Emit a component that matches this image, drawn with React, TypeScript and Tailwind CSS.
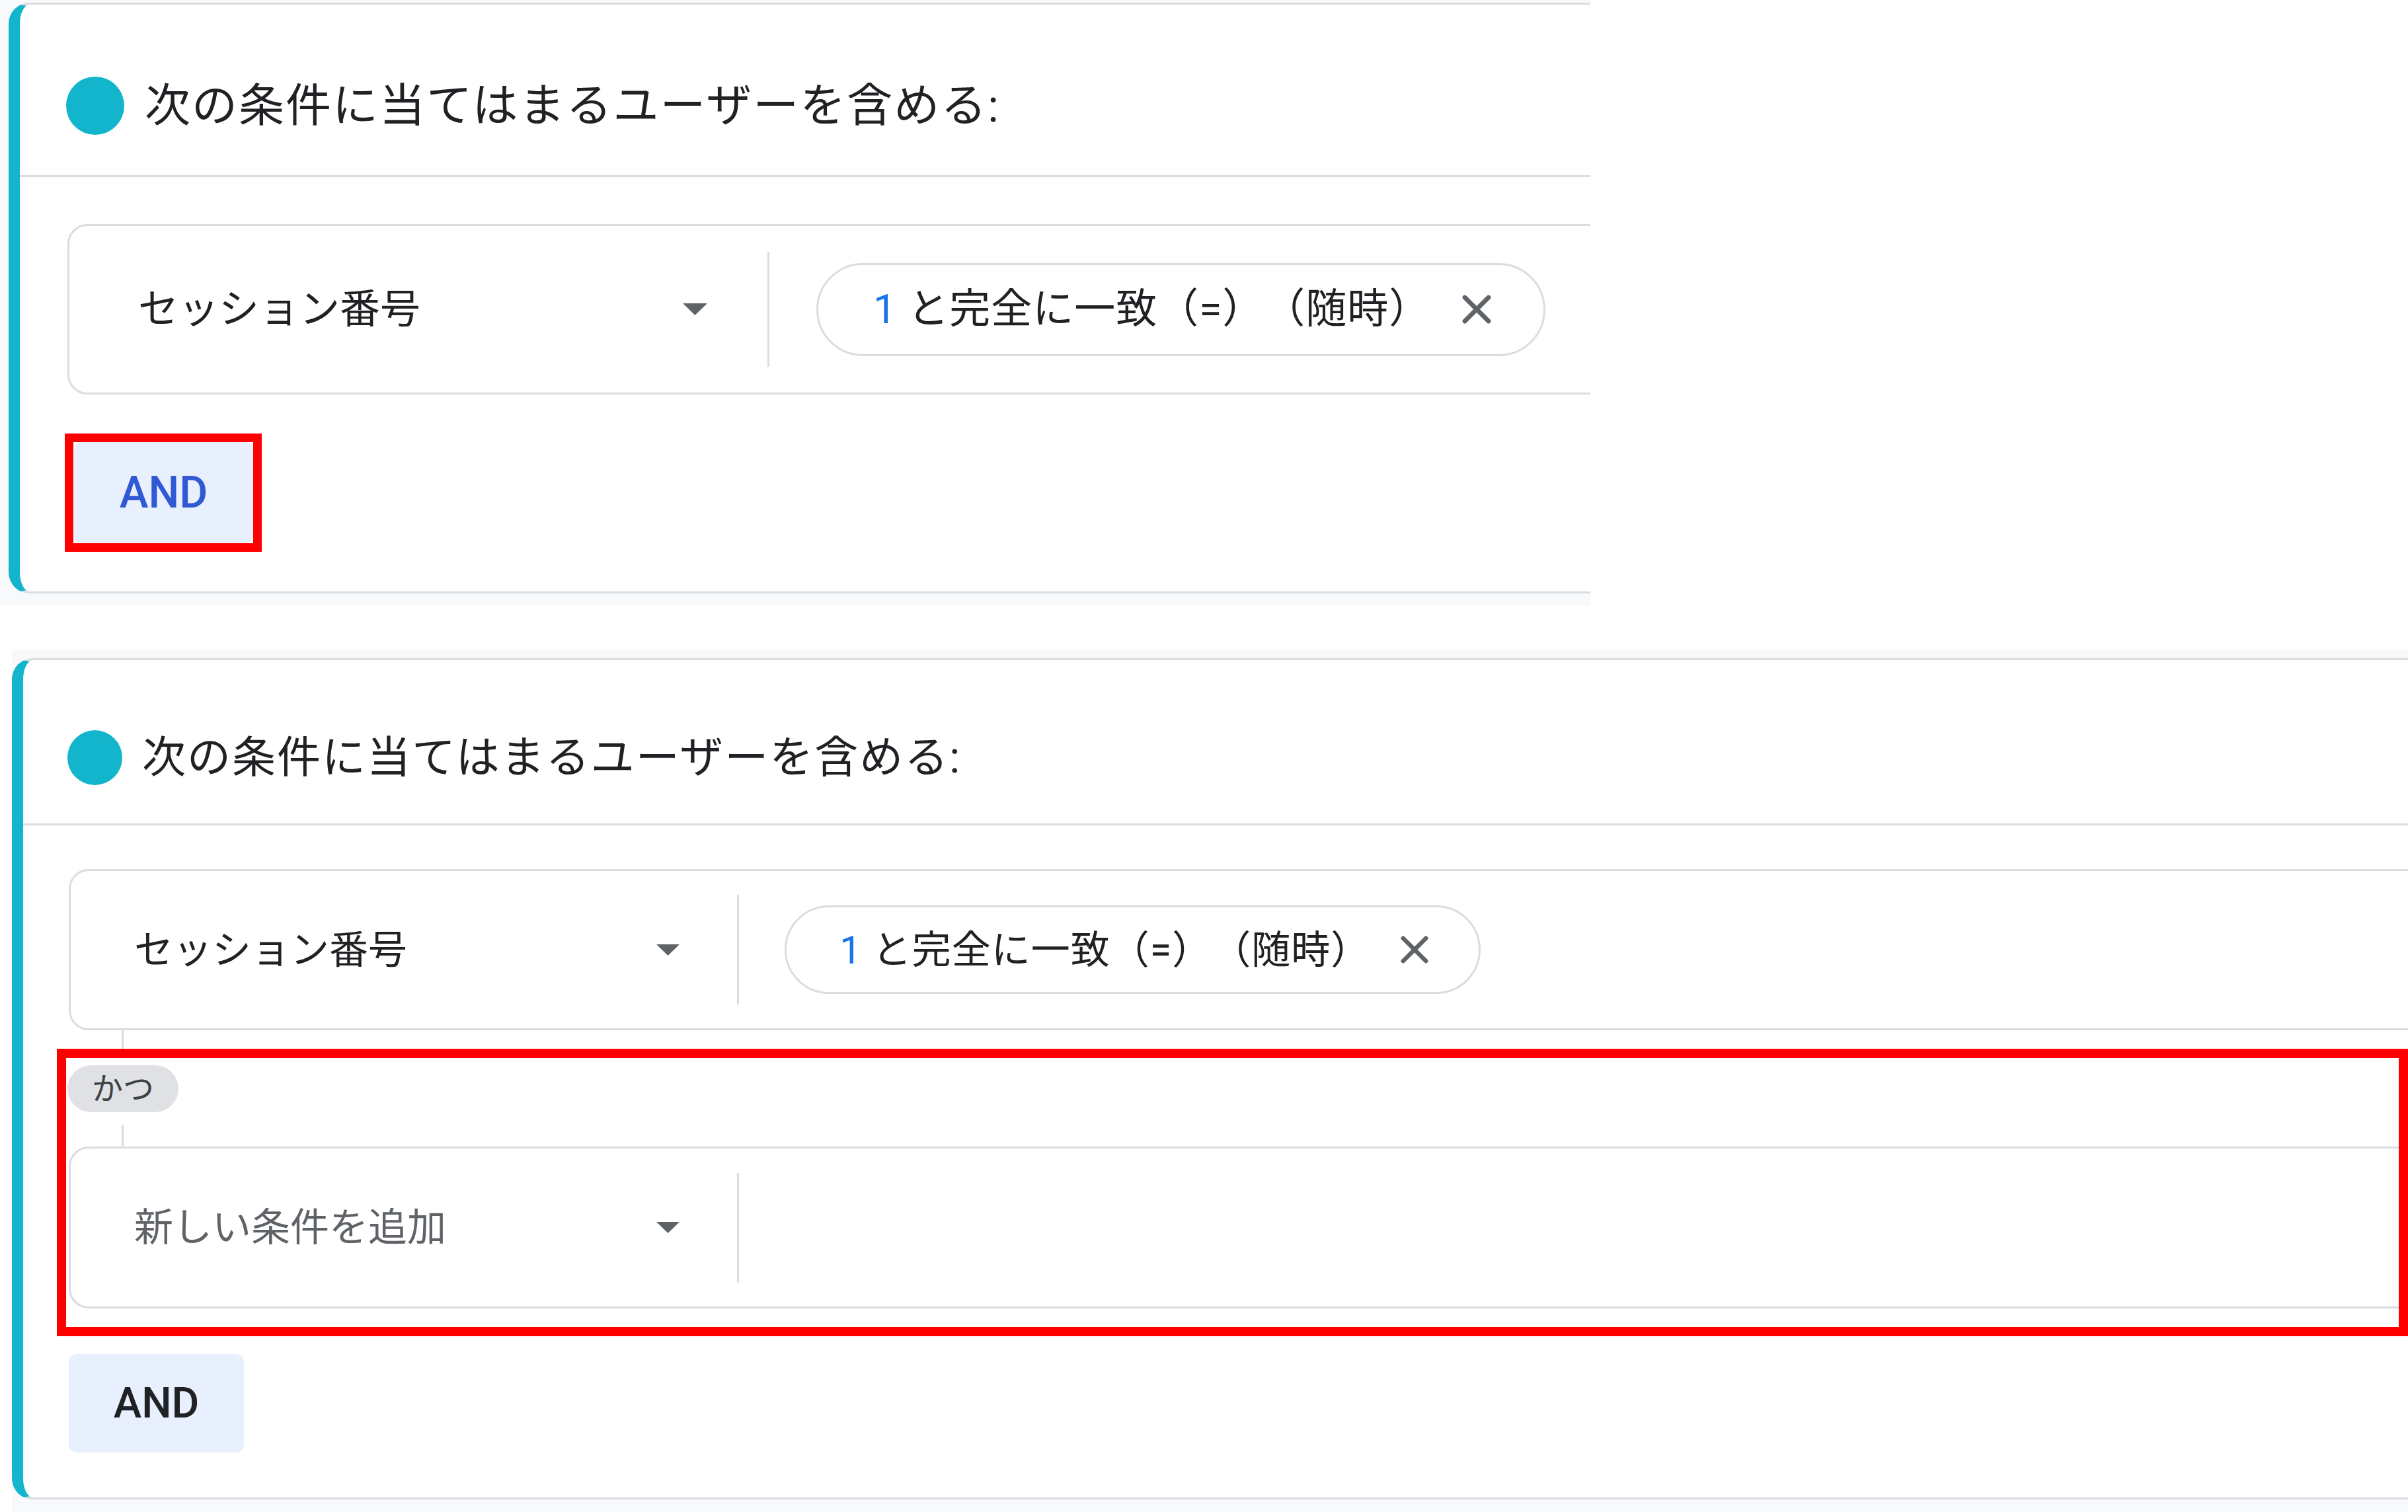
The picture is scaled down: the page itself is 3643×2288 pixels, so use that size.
import React from "react";

const Caret = ({ w, h }: { w: number; h: number }) => (
  <svg width={w} height={h} viewBox="0 0 10 5" preserveAspectRatio="none" className="shrink-0">
    <path d="M0 0h10L5 5z" fill="#5f6368" />
  </svg>
);

const Cross = ({ size }: { size: number }) => (
  <svg width={size} height={size} viewBox="0 0 24 24" className="shrink-0">
    <path d="M3 3l18 18M21 3L3 21" stroke="#5f6368" strokeWidth="3.4" strokeLinecap="round" />
  </svg>
);

export default function App() {
  return (
    <div className="relative w-[3643px] h-[2288px] overflow-hidden bg-white font-[Roboto,'Noto_Sans_CJK_JP',sans-serif] leading-none">
      {/* first capture */}
      <div className="w-[2406px] h-[916px] bg-[#f8f9fa] pl-[13px] pt-[4px]">
        <section className="h-[894px] overflow-hidden bg-white border-t-[3px] border-b-[3px] border-l-[17px] border-t-[#dadce0] border-b-[#dadce0] border-l-[#12b5cb] rounded-l-[32px]">
          <div className="flex items-center gap-[31px] pl-[70px] pt-[109px] pb-[61px] border-b-[3px] border-[#dadce0]">
            <span className="w-[88px] h-[88px] rounded-full bg-[#12b5cb] shrink-0" />
            <h2 className="text-[69px] tracking-[2px] font-normal text-[#202124] whitespace-nowrap">次の条件に当てはまるユーザーを含める:</h2>
          </div>

          <div className="mt-[71px] ml-[72px] w-[2600px] h-[258px] border-[3px] border-[#dadce0] rounded-[30px] flex items-center">
            <div className="w-[1056px] h-full shrink-0 flex items-center justify-between pl-[104px] pr-[91px]">
              <span className="text-[61px] text-[#202124]">セッション番号</span>
              <Caret w={37} h={18} />
            </div>
            <div className="w-[3px] h-[174px] bg-[#dadce0] shrink-0" />
            <div className="ml-[71px] w-[1103px] h-[141px] shrink-0 border-[3px] border-[#dadce0] rounded-full flex items-center justify-between pl-[83px] pr-[77px]">
              <span className="text-[62px] tracking-[1px] [text-spacing-trim:space-all] text-[#202124] whitespace-nowrap">
                <span className="text-[#1a73e8]">1</span> と完全に一致（=）（随時）
              </span>
              <Cross size={48} />
            </div>
          </div>

          <div className="mt-[72px] ml-[82px] w-[271px] h-[153px] rounded-[12px] bg-[#e8f0fe] flex items-center justify-center text-[66px] font-medium text-[#3059d4]">
            AND
          </div>
        </section>
      </div>

      {/* second capture */}
      <div className="mt-[67px] ml-[18px] w-[3625px] h-[1305px] bg-[#f8f9fa] pt-[13px]">
        <section className="h-[1273px] overflow-hidden bg-white border-t-[3px] border-b-[3px] border-l-[17px] border-t-[#dadce0] border-b-[#dadce0] border-l-[#12b5cb] rounded-l-[32px]">
          <div className="flex items-center gap-[30px] pl-[67px] pt-[106px] pb-[58px] border-b-[3px] border-[#dadce0]">
            <span className="w-[83px] h-[83px] rounded-full bg-[#12b5cb] shrink-0" />
            <h2 className="text-[66px] tracking-[2px] font-normal text-[#202124] whitespace-nowrap">次の条件に当てはまるユーザーを含める:</h2>
          </div>

          <div className="mt-[66px] ml-[69px] w-[3700px] h-[244px] border-[3px] border-[#dadce0] rounded-[30px] flex items-center">
            <div className="w-[1008px] h-full shrink-0 flex items-center justify-between pl-[96px] pr-[87px]">
              <span className="text-[59px] text-[#202124]">セッション番号</span>
              <Caret w={35} h={17} />
            </div>
            <div className="w-[3px] h-[166px] bg-[#dadce0] shrink-0" />
            <div className="ml-[69px] w-[1053px] h-[134px] shrink-0 border-[3px] border-[#dadce0] rounded-full flex items-center justify-between pl-[80px] pr-[74px]">
              <span className="text-[59px] tracking-[1px] [text-spacing-trim:space-all] text-[#202124] whitespace-nowrap">
                <span className="text-[#1a73e8]">1</span> と完全に一致（=）（随時）
              </span>
              <Cross size={46} />
            </div>
          </div>

          <div className="ml-[67px] flex flex-col">
            <div className="ml-[82px] w-[3px] h-[41px] bg-[#dadce0]" />
            <div className="mt-[12px] w-[168px] h-[71px] rounded-full bg-[#dfe1e5] flex items-center justify-center text-[47px] text-[#3c4043]">
              かつ
            </div>
            <div className="mt-[19px] ml-[82px] w-[3px] h-[33px] bg-[#dadce0]" />
          </div>

          <div className="ml-[69px] w-[3700px] h-[245px] border-[3px] border-[#dadce0] rounded-[30px] flex items-center">
            <div className="w-[1008px] h-full shrink-0 flex items-center justify-between pl-[96px] pr-[87px]">
              <span className="text-[59px] text-[#5f6368]">新しい条件を追加</span>
              <Caret w={35} h={17} />
            </div>
            <div className="w-[3px] h-[166px] bg-[#dadce0] shrink-0" />
          </div>

          <div className="mt-[69px] ml-[69px] w-[265px] h-[149px] rounded-[12px] bg-[#e8f0fe] flex items-center justify-center text-[64px] font-medium text-[#202124]">
            AND
          </div>
        </section>
      </div>

      {/* annotation frames */}
      <div className="absolute left-[98px] top-[656px] w-[298px] h-[179px] border-[13px] border-[#ff0000]" />
      <div className="absolute left-[86px] top-[1587px] w-[3557px] h-[435px] border-[14px] border-[#ff0000]" />
    </div>
  );
}
